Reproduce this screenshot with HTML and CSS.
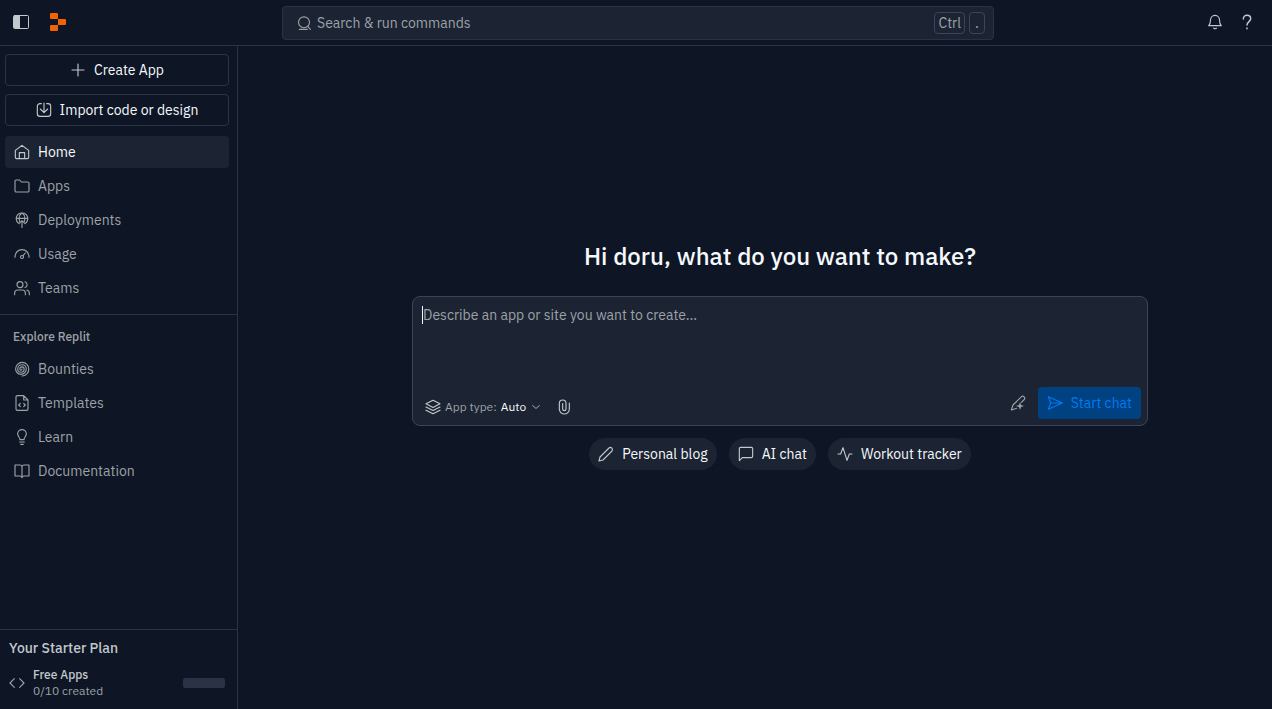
FILE: index.html
```html
<!DOCTYPE html>
<html lang="en">
  <head>
    <meta charset="utf-8">
    <title>Home - Replit</title>
    <link rel="stylesheet" href="styles.css">
  </head>
  <body>
    <header class="topbar">
      <div class="topbar-left">
        <button class="icon-button" type="button" aria-label="Toggle sidebar">
          <svg class="icon" viewBox="0 0 16 16"><rect x="0.5" y="1.5" width="15" height="13" rx="1"/><path class="solid" d="M1 2h6v12H1z"/></svg>
        </button>
        <a class="logo" href="#" aria-label="Replit">
          <svg width="16" height="18" viewBox="0 0 16 18"><path d="M1 0h6a1 1 0 0 1 1 1v5H1a1 1 0 0 1-1-1V1a1 1 0 0 1 1-1zM8 6h7a1 1 0 0 1 1 1v4a1 1 0 0 1-1 1H8zM1 12h7v5a1 1 0 0 1-1 1H1a1 1 0 0 1-1-1v-4a1 1 0 0 1 1-1z"/></svg>
        </a>
      </div>
      <label class="search">
        <svg class="icon" viewBox="0 0 24 24"><circle cx="12" cy="11" r="8.2"/><path d="M17.500 17l4 4.500M5 21.500h12"/></svg>
        <input type="text" placeholder="Search &amp; run commands" aria-label="Search and run commands">
        <kbd>Ctrl</kbd>
        <kbd>.</kbd>
      </label>
      <div class="topbar-right">
        <button class="icon-button" type="button" aria-label="Notifications">
          <svg class="icon" viewBox="0 0 24 24"><path d="M2.500 17.500c2-1.600 2.700-3.800 2.700-8C5.200 5.200 8 2 12 2s6.800 3.200 6.800 7.500c0 4.200.7 6.400 2.700 8zM10 21.300c1.200 1 2.800 1 4 0"/></svg>
        </button>
        <button class="icon-button help" type="button" aria-label="Help">
          <svg class="icon" viewBox="0 0 24 24"><path d="M6.500 7.500C6.500 4.300 8.900 2 12 2s5.500 2.200 5.500 5.200c0 4-5.500 4.600-5.500 9.300M12 21v1"/></svg>
        </button>
      </div>
    </header>

    <div class="layout">
      <aside class="sidebar">
        <div class="actions">
          <button class="outline-button" type="button">
            <svg class="icon" viewBox="0 0 24 24"><path d="M12 3v18M3 12h18"/></svg>
            Create App
          </button>
          <button class="outline-button" type="button">
            <svg class="icon" viewBox="0 0 24 24"><path d="M8 2.500H6A4 4 0 0 0 2 6.500v11a4 4 0 0 0 4 4h12a4 4 0 0 0 4-4v-11a4 4 0 0 0-4-4h-2M12 1.500V16M6.500 10.500L12 16l5.500-5.500"/></svg>
            Import code or design
          </button>
        </div>
        <nav class="menu">
          <a class="active" href="#">
            <svg class="icon" viewBox="0 0 24 24"><path d="M2 9.500L12 2l10 7.500V20a2 2 0 0 1-2 2H4a2 2 0 0 1-2-2zM8 22v-9h8v9"/></svg>
            Home
          </a>
          <a href="#">
            <svg class="icon" viewBox="0 0 24 24"><path d="M22.500 19a2 2 0 0 1-2 2h-17a2 2 0 0 1-2-2V5a2 2 0 0 1 2-2h5L11 6h9.500a2 2 0 0 1 2 2z"/></svg>
            Apps
          </a>
          <a href="#">
            <svg class="icon" viewBox="0 0 24 24"><path d="M6.500 16.500A8.700 8.700 0 1 1 17.500 16.500M3.500 9.500h17M8.500 14C7 9 8.300 4 12 1.200c3.700 2.800 5 7.800 3.500 12.800M12 23.500V13M7.500 17.500L12 13l4.500 4.500"/></svg>
            Deployments
          </a>
          <a href="#">
            <svg class="icon" viewBox="0 0 24 24"><path d="M1.500 17C1.500 10 6 5.500 12 5.500S22.500 10 22.500 17M13.400 14.600L17 10.500"/><circle cx="12" cy="16.500" r="2.300"/></svg>
            Usage
          </a>
          <a href="#">
            <svg class="icon" viewBox="0 0 24 24"><circle cx="9" cy="7" r="4.500"/><path d="M1 22v-2.500A4.500 4.500 0 0 1 5.500 15h7a4.500 4.500 0 0 1 4.500 4.500V22M16.500 2.700a4.500 4.500 0 0 1 0 8.600M19.500 15.200a4.500 4.500 0 0 1 3.500 4.300V22"/></svg>
            Teams
          </a>
        </nav>
        <nav class="menu explore">
          <h2>Explore Replit</h2>
          <a href="#">
            <svg class="icon" viewBox="0 0 24 24"><path d="M12 12A1.600 1.600 0 0 1 8.800 12A3.200 3.200 0 0 1 15.200 12A4.800 4.800 0 0 1 5.600 12A6.400 6.400 0 0 1 18.400 12A8 8 0 0 1 2.400 12M2.400 12A9.900 9.900 0 0 1 22.200 12A10.200 10.200 0 0 1 12 22.500"/></svg>
            Bounties
          </a>
          <a href="#">
            <svg class="icon" viewBox="0 0 24 24"><path d="M14.500 1H5a2 2 0 0 0-2 2v18a2 2 0 0 0 2 2h14a2 2 0 0 0 2-2V7.500zM14.500 1v6.500H21M9.500 12.500L7 15l2.500 2.500M14.500 12.500L17 15l-2.500 2.500"/></svg>
            Templates
          </a>
          <a href="#">
            <svg class="icon" viewBox="0 0 24 24"><path d="M9 16c0-3.500-3.500-4.600-3.500-8.700C5.500 3.800 8.200 1 12 1s6.500 2.800 6.500 6.300C18.500 11.400 15 12.500 15 16zM8.500 19.500h7M10 23h4"/></svg>
            Learn
          </a>
          <a href="#">
            <svg class="icon" viewBox="0 0 24 24"><path d="M12 6a3 3 0 0 0-3-3H1.500v16.500H9a3 3 0 0 1 3 2.500 3 3 0 0 1 3-2.500h7.500V3H15a3 3 0 0 0-3 3zM12 6v16"/></svg>
            Documentation
          </a>
        </nav>
        <section class="plan">
          <h2>Your Starter Plan</h2>
          <div class="plan-row">
            <svg class="icon" viewBox="0 0 24 24"><path d="M8 5.500L1.500 12 8 18.500M16 5.500l6.500 6.500-6.500 6.500"/></svg>
            <div class="plan-text">
              <strong>Free Apps</strong>
              <span>0/10 created</span>
            </div>
            <div class="meter"></div>
          </div>
        </section>
      </aside>

      <main class="home">
        <h1>Hi doru, what do you want to make?</h1>
        <form class="prompt">
          <span class="caret"></span>
          <textarea placeholder="Describe an app or site you want to create..." aria-label="Describe an app or site"></textarea>
          <div class="prompt-bar">
            <label class="app-type">
              <svg class="icon" viewBox="0 0 24 24"><path d="M12 2L1.500 7.300 12 12.600l10.500-5.300zM1.500 12L12 17.300 22.500 12M1.500 16.700L12 22l10.500-5.300"/></svg>
              App type:
              <select><option>Auto</option></select>
              <svg class="icon chevron" viewBox="0 0 24 24"><path d="M4 8.500l8 7 8-7"/></svg>
            </label>
            <button class="icon-button" type="button" aria-label="Attach file">
              <svg class="icon" viewBox="0 0 24 24"><path d="M20 6v9a7.500 7.500 0 0 1-15 0V6.500a5 5 0 0 1 10 0V15a2.500 2.500 0 0 1-5 0V7"/></svg>
            </button>
            <button class="icon-button enhance" type="button" aria-label="Improve prompt">
              <svg class="icon" viewBox="0 0 24 24"><path d="M10 20l-8 2.500L4.500 15 17.300 2.500a3 3 0 0 1 4.200 4.200L17 11"/><path class="solid" d="M15 10.500l1.500 4.500 4.500 1.500-4.500 1.500L15 22.500 13.500 18 9 16.500l4.500-1.500z"/></svg>
            </button>
            <button class="start" type="submit" disabled>
              <svg class="icon" viewBox="0 0 24 24"><path d="M2 2.500L23 12 2 21.500 5.500 12zM5.500 12H23"/></svg>
              Start chat
            </button>
          </div>
        </form>
        <div class="suggestions">
          <button type="button">
            <svg class="icon" viewBox="0 0 24 24"><path d="M16.500 3a3.200 3.200 0 0 1 4.500 4.500L7.500 21 1.500 22.500 3 16.500z"/></svg>
            Personal blog
          </button>
          <button type="button">
            <svg class="icon" viewBox="0 0 24 24"><path d="M22 15.500a2 2 0 0 1-2 2H6.500L2 22V4a2 2 0 0 1 2-2h16a2 2 0 0 1 2 2z"/></svg>
            AI chat
          </button>
          <button type="button">
            <svg class="icon" viewBox="0 0 24 24"><path d="M1.500 12h4L9 2.500l6 19 3.500-9.500h4"/></svg>
            Workout tracker
          </button>
        </div>
      </main>
    </div>
  </body>
</html>
```
FILE: styles.css
```css
* {
  box-sizing: border-box;
}
body {
  margin: 0;
  min-height: 100vh;
  display: flex;
  flex-direction: column;
  background-color: #0e1525;
  color: #f5f9fc;
  font-family: "IBM Plex Sans", Inter, sans-serif;
  font-size: 14px;
  line-height: 20px;
}
h1, h2 {
  margin: 0;
}
a {
  color: inherit;
  text-decoration: none;
}
button, input, textarea, select {
  padding: 0;
  border: 0;
  background: none;
  color: inherit;
  font: inherit;
}
.icon {
  flex: none;
  width: 16px;
  height: 16px;
  fill: none;
  stroke: currentColor;
  stroke-width: 1.7;
  stroke-linecap: round;
  stroke-linejoin: round;
}
.icon .solid {
  fill: currentColor;
  stroke: none;
}
.icon-button {
  display: flex;
  color: #c2c8cc;
}

/* top bar */
.topbar {
  display: grid;
  grid-template-columns: 1fr 712px 1fr;
  align-items: center;
  height: 46px;
  padding: 0 17px 0 21px;
  border-bottom: 1px solid #2b3245;
}
.topbar-left, .topbar-right {
  display: flex;
  align-items: center;
  gap: 16px;
  padding-bottom: 2px;
}
.topbar-left {
  gap: 21px;
  margin-left: -8px;
}
.topbar-left .icon {
  stroke-width: 1;
}
.topbar-right {
  justify-content: flex-end;
}
.help .icon {
  stroke-width: 2.2;
}
.logo {
  display: flex;
  fill: #f26207;
}
.search {
  display: flex;
  align-items: center;
  gap: 4px;
  height: 34px;
  padding: 0 8px 0 13px;
  border: 1px solid #2b3245;
  border-radius: 4px;
  background-color: #1c2333;
  color: #9da2a6;
}
.search input {
  flex: 1;
  min-width: 0;
  padding-left: 1px;
}
.search kbd {
  min-width: 16px;
  height: 22px;
  padding: 0 3px;
  border: 1px solid #3c445c;
  border-radius: 4px;
  font-family: inherit;
  text-align: center;
}
::placeholder {
  color: #9da2a6;
  opacity: 1;
}

/* sidebar */
.layout {
  flex: 1;
  display: flex;
}
.sidebar {
  flex: none;
  display: flex;
  flex-direction: column;
  width: 238px;
  border-right: 1px solid #2b3245;
}
.actions {
  display: flex;
  flex-direction: column;
  gap: 8px;
  padding: 8px 8px 10px 5px;
}
.outline-button {
  display: flex;
  align-items: center;
  justify-content: center;
  gap: 8px;
  height: 32px;
  border: 1px solid #2b3245;
  border-radius: 4px;
}
.outline-button .icon, .menu .active .icon, .suggestions .icon {
  color: #c2c8cc;
}
.menu {
  display: flex;
  flex-direction: column;
  gap: 2px;
  padding: 0 8px 10px 5px;
  color: #9da2a6;
}
.menu a {
  display: flex;
  align-items: center;
  gap: 8px;
  height: 32px;
  padding: 0 9px;
  border-radius: 4px;
}
.menu .active {
  background-color: #1c2333;
  color: #f5f9fc;
}
.explore {
  padding-top: 12px;
  border-top: 1px solid #2b3245;
}
.explore h2 {
  padding: 0 8px 4px;
  font-size: 12px;
  font-weight: 500;
}
.plan {
  margin-top: auto;
  padding: 8px 12px 10px 9px;
  border-top: 1px solid #2b3245;
  color: #c2c8cc;
}
.plan h2 {
  font-size: 14px;
  font-weight: 500;
}
.plan-row {
  display: flex;
  align-items: center;
  gap: 8px;
  padding-top: 9px;
  font-size: 12px;
  line-height: 16px;
}
.plan-row .icon, .plan-text span {
  color: #9da2a6;
}
.plan-text {
  flex: 1;
  display: flex;
  flex-direction: column;
}
.plan-text strong {
  font-weight: 500;
}
.meter {
  width: 42px;
  height: 10px;
  border-radius: 2px;
  background-color: #2b3245;
}

/* home */
.home {
  flex: 1;
  display: flex;
  flex-direction: column;
  align-items: center;
  justify-content: center;
  padding: 0 0 45px 50px;
}
.home h1 {
  font-size: 24px;
  font-weight: 500;
  line-height: 32px;
}
.prompt {
  position: relative;
  width: 100%;
  max-width: 736px;
  margin: 24px 0 12px;
  padding: 8px 6px 6px 10px;
  border: 1px solid #3c445c;
  border-radius: 8px;
  background-color: #1c2333;
}
.caret {
  position: absolute;
  top: 9px;
  left: 9px;
  width: 1px;
  height: 18px;
  background-color: #f5f9fc;
}
.prompt textarea {
  display: block;
  width: 100%;
  height: 82px;
  outline: 0;
  resize: none;
}
.prompt-bar {
  display: flex;
  align-items: center;
  gap: 15px;
  padding-left: 2px;
}
.app-type {
  display: flex;
  align-items: center;
  gap: 4px;
  padding-top: 8px;
  color: #9da2a6;
  font-size: 12px;
}
.prompt-bar > .icon-button {
  padding-top: 8px;
}
.app-type select {
  appearance: none;
  color: #f5f9fc;
}
.app-type .icon {
  color: #c2c8cc;
}
.app-type .chevron {
  width: 10px;
  height: 10px;
  stroke-width: 2;
}
.prompt-bar > .enhance {
  margin-left: auto;
  padding: 0;
  color: #9da2a6;
}
.start {
  display: flex;
  align-items: center;
  gap: 8px;
  height: 32px;
  margin-left: -3px;
  padding: 0 9px;
  border-radius: 4px;
  background-color: #004182;
  color: #0079f2;
}
.suggestions {
  display: flex;
  flex-wrap: wrap;
  gap: 12px;
}
.suggestions button {
  display: flex;
  align-items: center;
  gap: 8px;
  height: 32px;
  padding: 0 9px;
  border-radius: 16px;
  background-color: #1c2333;
}
```
